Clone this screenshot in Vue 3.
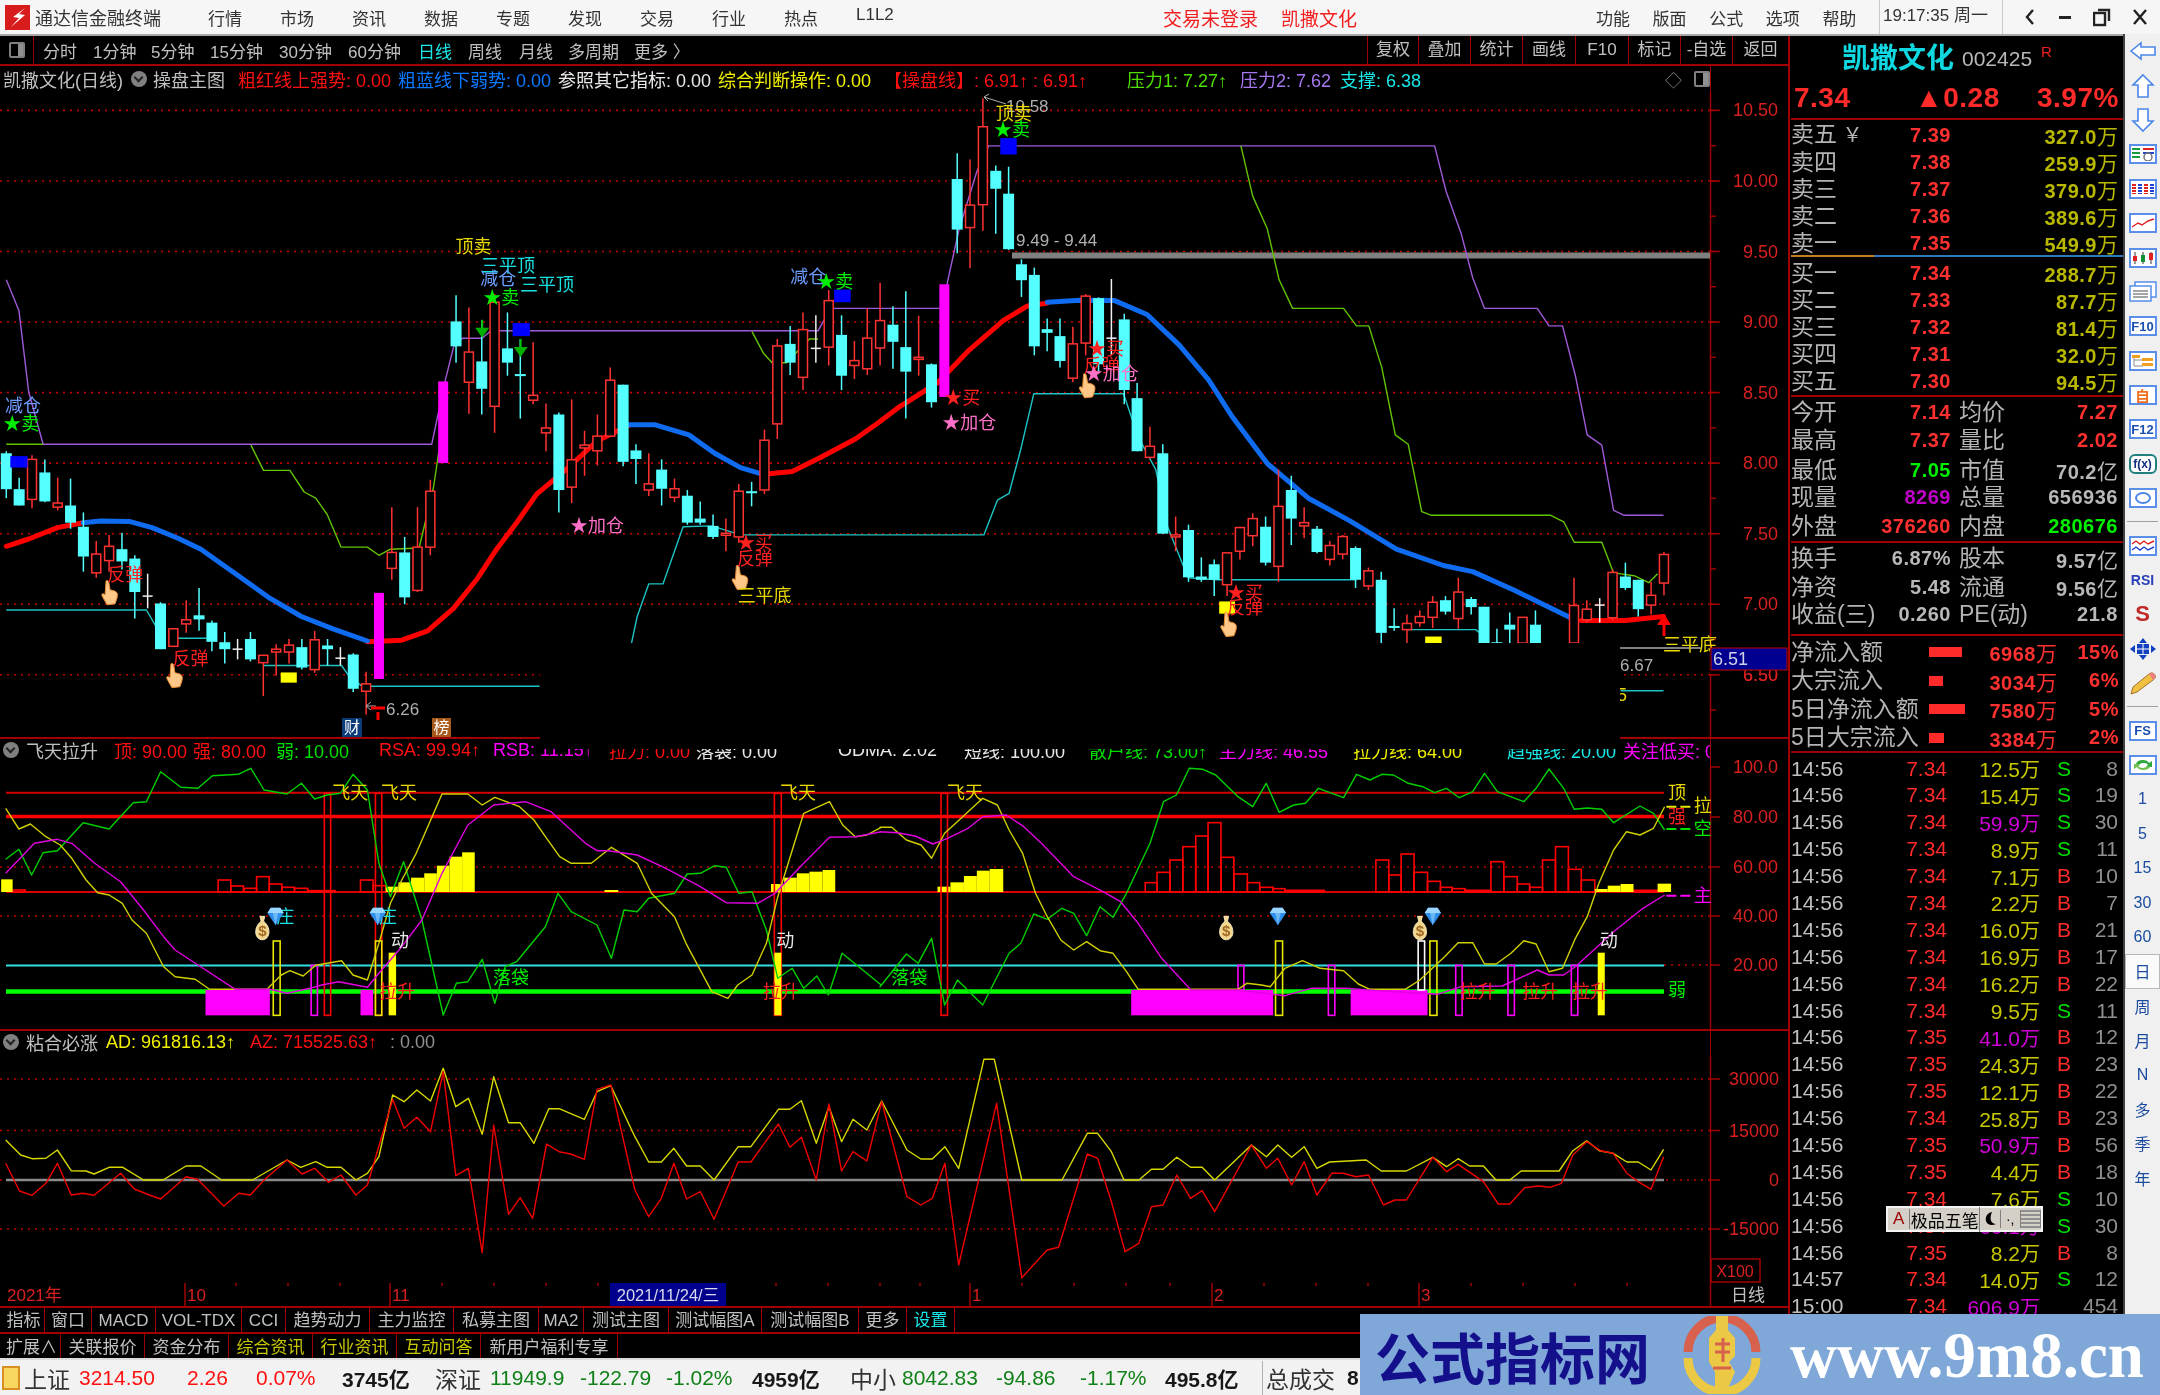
<script setup>
// chart points were read off zoomed crops, so each group carries its crop scale
const L1 = { sx: 1 / 1.742, ox: 0, sy: 1 / 2.45, oy: 90 }
const R1 = { sx: 1 / 1.704, ox: 880, sy: 1 / 2.45, oy: 90 }
const L2 = { sx: 1 / 1.742, ox: 0, sy: 1 / 3, oy: 730 }
const R2 = { sx: 1 / 1.704, ox: 880, sy: 1 / 3, oy: 730 }
const P3 = { sx: 1 / 0.871, ox: 0, sy: 1 / 3, oy: 1030 }

const px = (s, x) => s.ox + x * s.sx
const py = (s, y) => s.oy + y * s.sy
const line = (s, a) => {
  const out = []
  for (let i = 0; i < a.length; i += 2) out.push(`${px(s, a[i]).toFixed(1)},${py(s, a[i + 1]).toFixed(1)}`)
  return out.join(' ')
}

const menus = ['行情', '市场', '资讯', '数据', '专题', '发现', '交易', '行业', '热点', 'L1L2']
const rightMenus = ['功能', '版面', '公式', '选项', '帮助']

const periods = [
  { t: '分时', w: 50 }, { t: '1分钟', w: 58 }, { t: '5分钟', w: 59 }, { t: '15分钟', w: 69 },
  { t: '30分钟', w: 69 }, { t: '60分钟', w: 70 }, { t: '日线', w: 50, c: 'c-cyan' }, { t: '周线', w: 51 },
  { t: '月线', w: 49 }, { t: '多周期', w: 66 }, { t: '更多 〉', w: 70 },
]
const tools = [
  { t: '复权', w: 51 }, { t: '叠加', w: 52 }, { t: '统计', w: 52 }, { t: '画线', w: 53 },
  { t: 'F10', w: 53 }, { t: '标记', w: 52 }, { t: '-自选', w: 52 }, { t: '返回', w: 56 },
]

const infoItems = [
  { t: '粗红线上强势: 0.00', c: 'c-red', w: 160 },
  { t: '粗蓝线下弱势: 0.00', c: 'c-blue', w: 160 },
  { t: '参照其它指标: 0.00', c: 'c-white', w: 160 },
  { t: '综合判断操作: 0.00', c: 'c-yellow', w: 166 },
  { t: '【操盘线】: 6.91↑ : 6.91↑', c: 'c-red', w: 243 },
  { t: '压力1: 7.27↑', c: 'c-lime', w: 113 },
  { t: '压力2: 7.62', c: 'c-purple', w: 100 },
  { t: '支撑: 6.38', c: 'c-cyan', w: 100 },
]

const title2 = [
  { t: '顶: 90.00', c: 'c-red', w: 79 }, { t: '强: 80.00', c: 'c-red', w: 83 },
  { t: '弱: 10.00', c: 'c-green', w: 103 }, { t: 'RSA: 99.94↑', c: 'c-red', w: 114 },
  { t: 'RSB: 11.15↑', c: 'c-magenta', w: 116 }, { t: '拉力: 0.00', c: 'c-red', w: 87 },
  { t: '落袋: 0.00', c: 'c-white', w: 142 }, { t: 'ODMA: 2.02', c: 'c-white', w: 126 },
  { t: '短线: 100.00', c: 'c-white', w: 125 }, { t: '散户线: 73.00↑', c: 'c-green', w: 130 },
  { t: '主力线: 46.55', c: 'c-magenta', w: 134 }, { t: '拉力线: 64.00', c: 'c-yellow', w: 154 },
  { t: '趋强线: 20.00', c: 'c-cyan', w: 116 }, { t: '关注低买: 0', c: 'c-magenta', w: 86 },
]
const title3 = [
  { t: 'AD: 961816.13↑', c: 'c-yellow', w: 144 },
  { t: 'AZ: 715525.63↑', c: 'c-red', w: 140 },
  { t: ': 0.00', c: 'c-gray', w: 80 },
]

const tabsA = [
  { t: '指标', w: 42 }, { t: '窗口', w: 47 }, { t: 'MACD', w: 64 }, { t: 'VOL-TDX', w: 86 }, { t: 'CCI', w: 44 },
  { t: '趋势动力', w: 84 }, { t: '主力监控', w: 84 }, { t: '私募主图', w: 85 }, { t: 'MA2', w: 45 },
  { t: '测试主图', w: 85 }, { t: '测试幅图A', w: 93 }, { t: '测试幅图B', w: 97 }, { t: '更多', w: 48 },
  { t: '设置', w: 48, c: 'c-cyan' },
]
const tabsB = [
  { t: '扩展∧', w: 58 }, { t: '关联报价', w: 84 }, { t: '资金分布', w: 84 }, { t: '综合资讯', w: 84, c: 'c-olive' },
  { t: '行业资讯', w: 84, c: 'c-olive' }, { t: '互动问答', w: 84, c: 'c-olive' }, { t: '新用户福利专享', w: 137 },
]

const statusItems = [
  { t: '上证', c: 'st-name', w: 55 }, { t: '3214.50', c: 'st-red', w: 108 }, { t: '2.26', c: 'st-red', w: 69 },
  { t: '0.07%', c: 'st-red', w: 86 }, { t: '3745亿', c: 'st-dark', w: 93 },
  { t: '深证', c: 'st-name', w: 55 }, { t: '11949.9', c: 'st-green', w: 90 }, { t: '-122.79', c: 'st-green', w: 86 },
  { t: '-1.02%', c: 'st-green', w: 86 }, { t: '4959亿', c: 'st-dark', w: 98 },
  { t: '中小', c: 'st-name', w: 52 }, { t: '8042.83', c: 'st-green', w: 94 }, { t: '-94.86', c: 'st-green', w: 84 },
  { t: '-1.17%', c: 'st-green', w: 85 }, { t: '495.8亿', c: 'st-dark', w: 97 },
  { t: '总成交', c: 'st-name st-first', w: 85 }, { t: '8', c: 'st-dark', w: 20 },
]

// [kind, top, bottom, high, low] in crop y; c = falling, r = rising, w = flat, n = nothing drawn
const candles = [
  ['c', 890, 978, 885, 1000], ['c', 978, 1018, 950, 1018], ['r', 905, 1003, 895, 1025], ['c', 937, 1008, 905, 1010],
  ['r', 1012, 1022, 950, 1030], ['c', 1018, 1060, 952, 1075], ['c', 1070, 1143, 1035, 1180], ['r', 1137, 1183, 1105, 1195],
  ['r', 1118, 1153, 1090, 1180], ['c', 1125, 1155, 1085, 1175], ['c', 1148, 1230, 1140, 1295], ['w', 1240, 1240, 1185, 1270],
  ['c', 1258, 1370, 1255, 1370], ['r', 1320, 1363, 1320, 1363], ['r', 1298, 1308, 1250, 1330], ['c', 1287, 1297, 1220, 1325],
  ['c', 1305, 1352, 1300, 1375], ['c', 1353, 1370, 1328, 1405], ['w', 1370, 1370, 1345, 1395], ['c', 1345, 1395, 1328, 1400],
  ['r', 1385, 1403, 1385, 1485], ['r', 1370, 1377, 1358, 1435], ['r', 1360, 1377, 1345, 1405], ['c', 1365, 1415, 1345, 1420],
  ['r', 1347, 1420, 1325, 1428], ['c', 1361, 1370, 1345, 1410], ['w', 1392, 1392, 1365, 1410], ['c', 1383, 1467, 1380, 1475],
  ['r', 1455, 1473, 1425, 1530], ['m', 1232, 1443, 1232, 1450], ['r', 1133, 1172, 1022, 1200], ['c', 1133, 1243, 1095, 1260],
  ['r', 1120, 1226, 1022, 1230], ['r', 983, 1120, 955, 1140], ['m', 714, 914, 714, 914], ['c', 567, 628, 503, 668],
  ['r', 642, 716, 533, 793], ['c', 665, 732, 565, 795], ['r', 520, 775, 500, 840], ['c', 633, 668, 545, 700],
  ['c', 696, 701, 610, 805], ['r', 748, 760, 618, 770], ['r', 828, 840, 768, 885], ['c', 795, 980, 790, 1035],
  ['r', 906, 973, 758, 1012], ['r', 870, 877, 835, 945], ['r', 848, 884, 795, 920], ['r', 711, 848, 680, 850],
  ['c', 722, 911, 722, 922], ['c', 883, 904, 868, 965], ['r', 965, 980, 890, 995], ['c', 930, 977, 905, 1018],
  ['r', 977, 998, 952, 1010], ['c', 994, 1060, 980, 1065], ['c', 1050, 1060, 1008, 1065], ['c', 1068, 1095, 1040, 1100],
  ['r', 1086, 1090, 1050, 1130], ['r', 983, 1095, 965, 1110], ['c', 983, 988, 960, 1020], ['r', 858, 980, 832, 990],
  ['r', 627, 818, 610, 855], ['c', 622, 668, 578, 698], ['r', 587, 704, 545, 735], ['w', 633, 633, 552, 668],
  ['r', 516, 630, 490, 675], ['c', 600, 700, 552, 735], ['r', 663, 675, 615, 708], ['r', 608, 683, 535, 698],
  ['r', 565, 632, 472, 675], ['c', 575, 617, 530, 683], ['c', 630, 690, 493, 805], ['r', 655, 660, 553, 700],
  ['c', 672, 765, 670, 778], ['m', 476, 752, 476, 752], ['c', 218, 342, 155, 400], ['r', 282, 337, 170, 437],
  ['r', 90, 281, 20, 345], ['c', 198, 242, 185, 352], ['c', 254, 390, 188, 392], ['c', 427, 466, 415, 507],
  ['c', 453, 628, 435, 650], ['c', 586, 595, 560, 640], ['c', 603, 664, 560, 680], ['r', 622, 706, 580, 716],
  ['r', 505, 620, 500, 650], ['c', 510, 672, 508, 690], ['w', 608, 608, 463, 650], ['c', 562, 735, 548, 770],
  ['c', 755, 885, 718, 885], ['r', 873, 900, 825, 903], ['c', 890, 1087, 868, 1088], ['r', 1090, 1095, 1045, 1130],
  ['c', 1078, 1194, 1065, 1205], ['c', 1192, 1200, 1145, 1205], ['c', 1162, 1200, 1150, 1240], ['r', 1134, 1212, 1134, 1240],
  ['r', 1072, 1130, 1070, 1150], ['r', 1050, 1092, 1037, 1118], ['c', 1070, 1158, 1045, 1165], ['r', 1020, 1167, 930, 1205],
  ['c', 980, 1050, 945, 1115], ['r', 1060, 1068, 1022, 1098], ['c', 1075, 1132, 1068, 1135], ['r', 1116, 1150, 1105, 1165],
  ['r', 1094, 1137, 1090, 1150], ['c', 1122, 1200, 1118, 1220], ['r', 1178, 1215, 1170, 1225], ['c', 1200, 1330, 1180, 1355],
  ['c', 1313, 1318, 1270, 1325], ['r', 1307, 1322, 1285, 1355], ['r', 1290, 1305, 1275, 1315], ['r', 1255, 1292, 1240, 1318],
  ['c', 1250, 1278, 1240, 1285], ['r', 1230, 1295, 1195, 1320], ['c', 1247, 1267, 1242, 1285], ['c', 1266, 1355, 1266, 1355],
  ['c', 1353, 1355, 1320, 1355], ['c', 1310, 1322, 1280, 1355], ['r', 1292, 1355, 1292, 1355], ['c', 1310, 1355, 1275, 1355],
  ['n', 0, 0, 0, 0], ['n', 0, 0, 0, 0], ['r', 1263, 1355, 1195, 1355], ['r', 1272, 1298, 1250, 1305],
  ['w', 1262, 1262, 1245, 1305], ['r', 1182, 1293, 1175, 1300], ['c', 1192, 1220, 1158, 1225], ['c', 1200, 1272, 1200, 1290],
  ['r', 1238, 1262, 1205, 1285], ['r', 1138, 1208, 1132, 1238],
]
const candleItems = candles
  .map((c, i) => ({
    kind: c[0],
    x: 6.3 + 12.85 * i,
    top: py(L1, c[1]),
    h: Math.max(py(L1, c[2]) - py(L1, c[1]), 2),
    hi: py(L1, c[3]),
    lo: py(L1, c[4]),
  }))
  .filter((c) => c.kind !== 'n')

const maRed = [
  line(L1, [11, 1118, 50, 1100, 100, 1072, 145, 1060]),
  line(L1, [640, 1352, 700, 1348, 745, 1325, 790, 1270, 830, 1200, 865, 1125, 900, 1060, 935, 990, 990, 925, 1040, 860, 1095, 822]),
  line(L1, [1340, 940, 1380, 935, 1430, 900, 1490, 855, 1530, 815, 1568, 775]) + ' ' +
    line(R1, [40, 770, 100, 715, 150, 640, 210, 565, 250, 530, 285, 522]),
  line(R1, [1195, 1300, 1270, 1300, 1335, 1290]),
]
const maBlue = [
  line(L1, [145, 1060, 175, 1056, 225, 1057, 265, 1072, 310, 1098, 350, 1125, 385, 1160, 430, 1205, 470, 1245, 525, 1290, 580, 1320, 640, 1350]),
  line(L1, [1095, 820, 1140, 820, 1200, 845, 1245, 890, 1290, 925, 1325, 940]),
  line(R1, [285, 520, 340, 515, 400, 516, 455, 550, 510, 625, 560, 710, 600, 800, 660, 915, 730, 1000, 800, 1055, 880, 1125, 960, 1165, 1010, 1180, 1080, 1225, 1175, 1292]),
]
const purpleLine = [
  line(L1, [11, 465, 33, 540, 50, 740, 75, 868, 752, 868, 775, 715, 790, 630, 805, 608, 840, 608, 855, 590, 1425, 590, 1435, 565, 1450, 535, 1568, 535]) + ' ' +
    line(R1, [105, 535, 115, 470, 135, 340, 165, 200, 185, 137, 945, 137, 965, 250, 990, 350, 1010, 460, 1030, 535, 1120, 535, 1140, 578, 1163, 578, 1185, 700, 1205, 845, 1230, 870, 1250, 1030, 1268, 1042, 1335, 1042]),
]
const limeLine = [
  line(L1, [11, 868, 75, 868]),
  line(L1, [437, 870, 459, 932, 505, 932, 530, 985, 550, 1000, 570, 1040, 594, 1120, 640, 1120, 660, 1140, 680, 1125, 730, 1122, 755, 975, 765, 880]),
  line(L1, [1310, 592, 1330, 645, 1345, 668, 1370, 668, 1410, 610, 1425, 610]),
  line(R1, [615, 137, 635, 260, 660, 340, 680, 465, 703, 535, 790, 535, 812, 578, 833, 578, 855, 680, 878, 845, 900, 868, 923, 1033, 940, 1042, 1143, 1042, 1165, 1058, 1183, 1108, 1230, 1108, 1250, 1183, 1285, 1190, 1310, 1207, 1325, 1185]),
]
const tealLine = [
  line(L1, [11, 1274, 255, 1274, 272, 1315]),
  line(L1, [300, 1343, 360, 1343]),
  line(L1, [459, 1410, 595, 1410, 610, 1440, 630, 1460, 640, 1461, 940, 1461]),
  line(L1, [1100, 1355, 1110, 1290, 1130, 1210, 1155, 1210, 1190, 1070, 1240, 1068, 1290, 1090, 1568, 1090]) + ' ' +
    line(R1, [177, 1090, 200, 1005, 220, 988, 240, 880, 262, 744, 415, 744, 440, 850, 470, 930, 490, 1070, 525, 1195, 575, 1200, 812, 1200]),
  line(R1, [900, 1322, 1015, 1322, 1030, 1340]),
  line(R1, [1262, 1472, 1335, 1472]),
]

const priceLevels = ['10.50', '10.00', '9.50', '9.00', '8.50', '8.00', '7.50', '7.00', '6.50'].map((t, i) => ({ t, y: 110.4 + i * 70.55 }))
const priceMinor = Array.from({ length: 18 }, (_, i) => 110.4 + i * 35.27)

const labels1 = [
  { s: L1, x: 825, y: 385, t: '顶卖', c: 'f-yellow' }, { s: L1, x: 885, y: 430, t: '三平顶', c: 'f-cyan' },
  { s: L1, x: 953, y: 478, t: '三平顶', c: 'f-cyan' }, { s: L1, x: 868, y: 462, t: '减仓', c: 'f-sky' },
  { s: L1, x: 40, y: 775, t: '减仓', c: 'f-sky' }, { s: L1, x: 1408, y: 458, t: '减仓', c: 'f-sky' },
  { s: L1, x: 218, y: 1188, t: '反弹', c: 'f-red' }, { s: L1, x: 332, y: 1393, t: '反弹', c: 'f-red' },
  { s: L1, x: 1315, y: 1148, t: '反弹', c: 'f-red' }, { s: R1, x: 378, y: 675, t: '反弹', c: 'f-red' },
  { s: R1, x: 622, y: 1268, t: '反弹', c: 'f-red' }, { s: L1, x: 1040, y: 1068, t: '★加仓', c: 'f-pink' },
  { s: R1, x: 152, y: 815, t: '★加仓', c: 'f-pink' }, { s: R1, x: 395, y: 697, t: '★加仓', c: 'f-pink' },
  { s: L1, x: 1315, y: 1110, t: '★买', c: 'f-red' }, { s: R1, x: 140, y: 755, t: '★买', c: 'f-red' },
  { s: R1, x: 385, y: 635, t: '★买', c: 'f-red' }, { s: R1, x: 622, y: 1232, t: '★买', c: 'f-red' },
  { s: L1, x: 1332, y: 1240, t: '三平底', c: 'f-yellow' }, { s: R1, x: 228, y: 60, t: '顶卖', c: 'f-yellow' },
  { s: L1, x: 873, y: 510, t: '★卖', c: 'f-green' }, { s: L1, x: 37, y: 818, t: '★卖', c: 'f-green' },
  { s: L1, x: 1455, y: 470, t: '★卖', c: 'f-green' }, { s: R1, x: 225, y: 97, t: '★卖', c: 'f-green' },
].map((l) => ({ x: px(l.s, l.x), y: py(l.s, l.y), t: l.t, c: l.c }))

const hands = [[L1, 190, 1232], [L1, 303, 1435], [L1, 1288, 1195], [R1, 352, 725], [R1, 593, 1310]]
  .map(([s, x, y]) => ({ x: px(s, x), y: py(s, y) }))
const blueBoxes = [[L1, 18, 897, 30, 28], [L1, 893, 571, 30, 32], [L1, 1453, 489, 29, 31], [R1, 205, 118, 28, 40]]
  .map(([s, x, y, w, h]) => ({ x: px(s, x), y: py(s, y), w: w * s.sx, h: h * s.sy }))
const yellowBoxes = [[L1, 489, 1427, 28, 25], [R1, 578, 1253, 27, 30], [R1, 929, 1339, 28, 18]]
  .map(([s, x, y, w, h]) => ({ x: px(s, x), y: py(s, y), w: w * s.sx, h: h * s.sy }))
const downArrows = [[840, 563], [907, 610]].map(([x, y]) => ({ x: px(L1, x), y: py(L1, y) }))

const yellowCurve = line(L2, [10, 235, 33, 297, 53, 282, 80, 320, 105, 345, 125, 385, 150, 450, 170, 488, 190, 495, 213, 520, 230, 570, 255, 610, 285, 710, 305, 740, 340, 748, 365, 778, 465, 778, 490, 735, 505, 722, 528, 738, 550, 706, 595, 692, 615, 735, 640, 750, 660, 640, 680, 520, 700, 450, 725, 370, 770, 192, 815, 192, 840, 225, 862, 202, 905, 230, 930, 270, 950, 320, 975, 380, 995, 400, 1030, 400, 1065, 352, 1110, 400, 1135, 490, 1175, 560, 1195, 640, 1240, 785, 1268, 805, 1285, 765, 1310, 735, 1335, 640, 1355, 500, 1400, 250, 1445, 215, 1468, 285, 1490, 320, 1510, 315, 1535, 292]) + ' ' +
  line(R2, [0, 292, 20, 292, 45, 330, 70, 345, 88, 385, 110, 310, 135, 270, 175, 205, 200, 225, 220, 300, 243, 370, 265, 490, 285, 560, 308, 630, 330, 660, 352, 635, 375, 662, 397, 670, 420, 725, 440, 778, 610, 778, 625, 760, 650, 765, 665, 770, 690, 715, 720, 692, 750, 715, 790, 722, 815, 762, 835, 778, 895, 778, 920, 750, 962, 680, 985, 638, 1010, 638, 1030, 702, 1050, 702, 1075, 670, 1097, 632, 1118, 642, 1140, 725, 1163, 715, 1185, 625, 1205, 560, 1225, 460, 1250, 360, 1272, 305, 1295, 315, 1318, 295, 1337, 230])
const magentaCurve = line(L2, [10, 430, 35, 385, 60, 340, 100, 328, 125, 340, 165, 400, 210, 455, 250, 540, 285, 620, 305, 660, 345, 705, 410, 778, 470, 778, 500, 790, 540, 775, 560, 765, 590, 755, 640, 772, 660, 730, 700, 650, 735, 570, 770, 430, 815, 285, 860, 225, 915, 215, 960, 245, 1020, 340, 1040, 362, 1060, 362, 1110, 375, 1160, 415, 1220, 470, 1265, 518, 1320, 520, 1350, 490, 1400, 400, 1445, 322, 1490, 320, 1535, 305]) + ' ' +
  line(R2, [0, 305, 30, 308, 60, 318, 90, 342, 115, 325, 150, 295, 175, 260, 215, 255, 245, 290, 275, 340, 330, 440, 380, 485, 410, 515, 440, 580, 480, 685, 530, 780, 610, 780, 690, 797, 735, 775, 795, 775, 830, 780, 950, 793, 990, 770, 1060, 768, 1120, 720, 1140, 735, 1165, 735, 1185, 710, 1250, 605, 1300, 535, 1337, 495])
const greenCurve = line(L2, [10, 388, 33, 358, 55, 435, 75, 368, 100, 362, 145, 278, 190, 297, 232, 218, 255, 215, 280, 125, 315, 172, 345, 175, 370, 137, 415, 133, 437, 115, 460, 180, 500, 192, 525, 160, 548, 207, 570, 195, 593, 190, 615, 133, 640, 180, 660, 400, 680, 500, 703, 395, 735, 570, 772, 855, 795, 760, 815, 755, 840, 688, 862, 820, 880, 710, 900, 695, 950, 590, 972, 490, 995, 545, 1040, 585, 1065, 685, 1087, 540, 1110, 545, 1130, 505, 1175, 490, 1197, 432, 1220, 430, 1245, 407, 1265, 412, 1287, 490, 1310, 485, 1335, 600, 1355, 745, 1380, 715, 1400, 775, 1423, 738, 1443, 795, 1467, 670, 1535, 765]) + ' ' +
  line(R2, [0, 770, 45, 672, 65, 700, 88, 625, 110, 825, 132, 750, 175, 825, 220, 670, 240, 640, 262, 552, 285, 568, 310, 535, 330, 550, 352, 617, 375, 530, 397, 562, 420, 490, 460, 340, 483, 215, 505, 195, 527, 115, 550, 118, 572, 135, 610, 200, 635, 230, 658, 160, 680, 247, 705, 225, 725, 220, 747, 175, 790, 203, 812, 133, 835, 150, 855, 133, 875, 135, 900, 160, 925, 170, 945, 188, 965, 175, 987, 203, 1010, 185, 1030, 130, 1052, 185, 1097, 215, 1118, 175, 1140, 117, 1165, 175, 1183, 238, 1205, 234, 1230, 238, 1250, 278, 1295, 228, 1318, 250, 1337, 300])

// [x1, x2, top, bottom] in crop coordinates
const rects = (s, list) => list.map(([a, b, t, bot]) => ({
  x: px(s, a), w: (b - a) * s.sx, y: py(s, t), h: (bot - t) * s.sy,
}))
const base = 486
const barsHollow = [
  ...rects(L2, [[22, 44, 480, base], [380, 402, 450, base], [402, 424, 468, base], [425, 447, 475, base], [447, 469, 440, base], [469, 491, 462, base], [491, 513, 472, base], [513, 536, 475, base], [536, 584, 482, base], [628, 650, 450, base], [650, 672, 467, base]]),
  ...rects(R2, [[452, 472, 458, base], [472, 494, 427, base], [494, 516, 390, base], [516, 538, 350, base], [538, 559, 318, base], [559, 581, 278, base], [581, 603, 382, base], [603, 626, 432, base], [626, 647, 458, base], [647, 670, 472, base], [670, 690, 476, base], [690, 757, 481, base], [845, 867, 390, base], [867, 888, 435, base], [888, 910, 372, base], [910, 933, 427, base], [933, 955, 454, base], [955, 975, 472, base], [975, 997, 476, base], [997, 1041, 481, base], [1041, 1063, 395, base], [1063, 1086, 440, base], [1086, 1107, 462, base], [1107, 1129, 472, base], [1129, 1151, 390, base], [1151, 1173, 350, base], [1173, 1195, 418, base], [1195, 1218, 450, base], [1284, 1325, 481, base]]),
]
const barsYellow = [
  ...rects(L2, [[2, 22, 448, base], [672, 694, 470, base], [694, 716, 457, base], [716, 739, 443, base], [739, 761, 430, base], [761, 783, 407, base], [783, 805, 380, base], [805, 827, 367, base], [1053, 1077, 480, base], [1343, 1366, 462, base], [1366, 1388, 443, base], [1388, 1410, 430, base], [1410, 1433, 425, base], [1433, 1455, 420, base]]),
  ...rects(R2, [[98, 120, 470, base], [120, 143, 457, base], [143, 165, 438, base], [165, 187, 422, base], [187, 210, 417, base], [1218, 1240, 477, base], [1240, 1262, 467, base], [1262, 1284, 462, base], [1325, 1348, 461, base]]),
]
const fillMagenta = [...rects(L2, [[358, 470, 780, 856], [628, 650, 780, 856]]), ...rects(R2, [[428, 670, 780, 856], [802, 933, 780, 856]])]
const fillYellow = [...rects(L2, [[677, 690, 668, 856], [1349, 1361, 668, 856]]), ...rects(R2, [[1223, 1235, 668, 856]])]
const outlines = [
  ...rects(L2, [[565, 576, 190, 856], [654, 665, 190, 856], [1349, 1361, 190, 856]]).map((r) => ({ ...r, c: '#ff0000' })),
  ...rects(R2, [[104, 115, 190, 856]]).map((r) => ({ ...r, c: '#ff0000' })),
  ...rects(L2, [[476, 488, 633, 856], [654, 665, 633, 856]]).map((r) => ({ ...r, c: '#e8e800' })),
  ...rects(R2, [[674, 686, 633, 856], [937, 949, 633, 856]]).map((r) => ({ ...r, c: '#e8e800' })),
  ...rects(R2, [[917, 928, 633, 780]]).map((r) => ({ ...r, c: '#ffffff' })),
  ...rects(L2, [[542, 553, 706, 856]]).map((r) => ({ ...r, c: '#ff00ff' })),
  ...rects(R2, [[610, 620, 706, 780], [764, 775, 706, 856], [981, 992, 706, 856], [1070, 1081, 706, 856], [1178, 1189, 706, 856]]).map((r) => ({ ...r, c: '#ff00ff' })),
]
const labels2 = [
  { s: L2, x: 610, y: 188, t: '飞天', c: 'f-yellow' }, { s: L2, x: 695, y: 188, t: '飞天', c: 'f-yellow' },
  { s: L2, x: 1390, y: 188, t: '飞天', c: 'f-yellow' }, { s: R2, x: 145, y: 188, t: '飞天', c: 'f-yellow' },
  { s: L2, x: 697, y: 632, t: '动', c: 'f-white' }, { s: L2, x: 1368, y: 632, t: '动', c: 'f-white' },
  { s: R2, x: 1242, y: 632, t: '动', c: 'f-white' }, { s: L2, x: 692, y: 785, t: '拉升', c: 'f-red' },
  { s: L2, x: 1360, y: 785, t: '拉升', c: 'f-red' }, { s: R2, x: 1018, y: 785, t: '拉升', c: 'f-red' },
  { s: R2, x: 1125, y: 785, t: '拉升', c: 'f-red' }, { s: R2, x: 1210, y: 785, t: '拉升', c: 'f-red' },
  { s: L2, x: 890, y: 745, t: '落袋', c: 'f-green' }, { s: R2, x: 50, y: 745, t: '落袋', c: 'f-green' },
  { s: L2, x: 497, y: 560, t: '庄', c: 'f-cyan' }, { s: L2, x: 676, y: 560, t: '庄', c: 'f-cyan' },
  { s: R2, x: 1358, y: 188, t: '顶', c: 'f-yellow' }, { s: R2, x: 1402, y: 228, t: '拉', c: 'f-yellow' },
  { s: R2, x: 1358, y: 262, t: '强', c: 'f-red' }, { s: R2, x: 1402, y: 297, t: '空', c: 'f-green' },
  { s: R2, x: 1402, y: 497, t: '主', c: 'f-magenta' }, { s: R2, x: 1358, y: 780, t: '弱', c: 'f-green' },
].map((l) => ({ x: px(l.s, l.x), y: py(l.s, l.y), t: l.t, c: l.c }))
const dashes = [[230, '#e8e800'], [297, '#00e000'], [497, '#ff00ff']].map(([y, c]) => ({ y: py(R2, y), c, x1: px(R2, 1340), x2: px(R2, 1385) }))
const diamonds = [[L2, 480, 558], [L2, 658, 558], [R2, 678, 558], [R2, 942, 558]].map(([s, x, y]) => ({ x: px(s, x), y: py(s, y) }))
const bags = [[L2, 457, 595], [R2, 590, 595], [R2, 920, 595]].map(([s, x, y]) => ({ x: px(s, x), y: py(s, y) }))
const axis2 = [['100.0', 767], ['80.00', 817], ['60.00', 867], ['40.00', 916], ['20.00', 965]]

const yellow3 = line(P3, [5, 330, 18, 375, 28, 386, 40, 385, 50, 360, 62, 422, 75, 423, 82, 432, 95, 412, 107, 412, 125, 450, 142, 450, 162, 408, 175, 408, 193, 450, 220, 450, 250, 390, 262, 412, 275, 395, 285, 412, 297, 412, 310, 450, 320, 430, 330, 380, 342, 195, 352, 215, 363, 180, 375, 213, 386, 115, 397, 230, 408, 205, 420, 313, 430, 140, 443, 278, 453, 278, 465, 340, 478, 236, 487, 236, 509, 268, 520, 185, 532, 167, 553, 320, 565, 396, 576, 396, 587, 355, 598, 408, 610, 408, 622, 450, 643, 350, 654, 350, 678, 238, 688, 238, 698, 212, 711, 340, 722, 230, 733, 335, 743, 268, 755, 300, 768, 213, 790, 360, 802, 387, 812, 387, 823, 350, 835, 415, 857, 88, 866, 88, 890, 450, 925, 450, 947, 310, 956, 310, 968, 365, 979, 450, 992, 450, 1003, 418, 1013, 418, 1025, 382, 1037, 412, 1047, 412, 1058, 450, 1090, 345, 1103, 380, 1113, 345, 1125, 382, 1136, 350, 1147, 415, 1158, 396, 1190, 390, 1203, 423, 1225, 423, 1248, 382, 1260, 410, 1270, 386, 1280, 408, 1292, 408, 1303, 450, 1315, 450, 1325, 423, 1358, 423, 1370, 362, 1382, 332, 1393, 362, 1405, 370, 1417, 396, 1427, 396, 1438, 420, 1449, 358])
const red3 = line(P3, [5, 400, 17, 483, 28, 496, 40, 460, 50, 400, 62, 495, 72, 490, 82, 496, 105, 430, 117, 477, 130, 495, 140, 507, 162, 440, 172, 448, 195, 528, 208, 490, 218, 495, 230, 450, 250, 390, 263, 432, 274, 415, 286, 457, 297, 435, 310, 495, 320, 465, 342, 208, 352, 295, 363, 262, 375, 305, 386, 125, 397, 437, 408, 415, 420, 668, 430, 285, 443, 553, 453, 503, 464, 565, 476, 342, 487, 365, 497, 372, 509, 388, 520, 178, 532, 165, 553, 480, 565, 560, 576, 505, 587, 400, 598, 507, 610, 485, 622, 568, 643, 396, 654, 396, 678, 282, 688, 352, 698, 322, 711, 450, 722, 222, 733, 423, 743, 365, 755, 393, 768, 215, 790, 500, 802, 525, 812, 505, 823, 400, 835, 705, 868, 220, 890, 743, 912, 660, 922, 652, 947, 372, 956, 385, 968, 515, 980, 665, 992, 640, 1003, 530, 1013, 525, 1025, 435, 1037, 505, 1047, 482, 1058, 545, 1090, 345, 1103, 415, 1113, 385, 1125, 465, 1136, 395, 1147, 495, 1160, 430, 1170, 430, 1181, 440, 1192, 435, 1205, 525, 1215, 510, 1225, 510, 1248, 382, 1260, 425, 1270, 403, 1292, 455, 1305, 522, 1315, 522, 1328, 473, 1340, 468, 1350, 472, 1360, 460, 1370, 375, 1382, 335, 1394, 362, 1405, 370, 1417, 430, 1427, 455, 1438, 478, 1449, 380])
const axis3 = [['30000', 1079], ['15000', 1130.5], ['0', 1180], ['-15000', 1229]]
const timeMarks = [{ x: 185, t: '10' }, { x: 390, t: '11' }, { x: 970, t: '1' }, { x: 1212, t: '2' }, { x: 1419, t: '3' }]
const timeMinor = [236, 288, 340, 442, 494, 546, 598, 776, 828, 880, 920, 1022, 1074, 1126, 1170, 1264, 1316, 1368, 1471, 1523, 1575, 1627]

const sell = [['卖五', '7.39', '327.0'], ['卖四', '7.38', '259.9'], ['卖三', '7.37', '379.0'], ['卖二', '7.36', '389.6'], ['卖一', '7.35', '549.9']]
const buy = [['买一', '7.34', '288.7'], ['买二', '7.33', '87.7'], ['买三', '7.32', '81.4'], ['买四', '7.31', '32.0'], ['买五', '7.30', '94.5']]
const stats = [
  { a: '今开', b: '7.14', bc: 'q-red', c: '均价', d: '7.27', dc: 'q-red' },
  { a: '最高', b: '7.37', bc: 'q-red', c: '量比', d: '2.02', dc: 'q-red' },
  { a: '最低', b: '7.05', bc: 'q-green', c: '市值', d: '70.2', du: '亿', dc: 'q-gray' },
  { a: '现量', b: '8269', bc: 'q-magenta', c: '总量', d: '656936', dc: 'q-gray' },
  { a: '外盘', b: '376260', bc: 'q-red', c: '内盘', d: '280676', dc: 'q-green' },
]
const stats2 = [
  { a: '换手', b: '6.87%', bc: 'q-gray', c: '股本', d: '9.57', du: '亿', dc: 'q-gray' },
  { a: '净资', b: '5.48', bc: 'q-gray', c: '流通', d: '9.56', du: '亿', dc: 'q-gray' },
  { a: '收益(三)', b: '0.260', bc: 'q-gray', c: 'PE(动)', d: '21.8', dc: 'q-gray' },
]
const flows = [
  { a: '净流入额', w: 33, v: '6968', p: '15%' }, { a: '大宗流入', w: 14, v: '3034', p: '6%' },
  { a: '5日净流入额', w: 36, v: '7580', p: '5%' }, { a: '5日大宗流入', w: 15, v: '3384', p: '2%' },
]
const ticks = [
  ['14:56', '7.34', '12.5', 'S', '8'], ['14:56', '7.34', '15.4', 'S', '19'], ['14:56', '7.34', '59.9', 'S', '30', 1],
  ['14:56', '7.34', '8.9', 'S', '11'], ['14:56', '7.34', '7.1', 'B', '10'], ['14:56', '7.34', '2.2', 'B', '7'],
  ['14:56', '7.34', '16.0', 'B', '21'], ['14:56', '7.34', '16.9', 'B', '17'], ['14:56', '7.34', '16.2', 'B', '22'],
  ['14:56', '7.34', '9.5', 'S', '11'], ['14:56', '7.35', '41.0', 'B', '12', 1], ['14:56', '7.35', '24.3', 'B', '23'],
  ['14:56', '7.35', '12.1', 'B', '22'], ['14:56', '7.34', '25.8', 'B', '23'], ['14:56', '7.35', '50.9', 'B', '56', 1],
  ['14:56', '7.35', '4.4', 'B', '18'], ['14:56', '7.34', '7.6', 'S', '10'], ['14:56', '7.34', '60.1', 'S', '30', 1],
  ['14:56', '7.35', '8.2', 'B', '8'], ['14:57', '7.34', '14.0', 'S', '12'], ['15:00', '7.34', '606.9', '', '454', 1],
]
const sideNums = ['1', '5', '15', '30', '60']
const sideChars = ['周', '月', 'N', '多', '季', '年']
</script>

<template>
  <div class="screen">
    <header class="titlebar">
      <svg class="logo" viewBox="0 0 25 25" width="25" height="25">
        <rect width="25" height="25" fill="#d81c1c" />
        <path d="M20 3 L8 12 L14 13 L6 22 L20 10 L14 9 Z" fill="#fff" />
      </svg>
      <span class="app-name">通达信金融终端</span>
      <nav class="menu">
        <span v-for="m in menus" :key="m" class="menu-item">{{ m }}</span>
      </nav>
      <span class="login">交易未登录</span>
      <span class="login login-name">凯撒文化</span>
      <nav class="menu menu-right">
        <span v-for="m in rightMenus" :key="m" class="menu-item-right">{{ m }}</span>
      </nav>
      <span class="clock">19:17:35 周一</span>
      <div class="win-buttons">
        <svg viewBox="0 0 14 20" width="14" height="20"><path d="M10 3 L4 10 L10 17" fill="none" stroke="#222" stroke-width="2.4" /></svg>
        <svg viewBox="0 0 14 20" width="14" height="20"><rect x="1" y="9" width="12" height="3" fill="#222" /></svg>
        <svg viewBox="0 0 18 20" width="18" height="20"><rect x="1" y="6" width="11" height="12" fill="none" stroke="#222" stroke-width="2.4" /><path d="M5 3 H16 V14" fill="none" stroke="#222" stroke-width="2.4" /></svg>
        <svg viewBox="0 0 16 20" width="16" height="20"><path d="M2 3 L14 17 M14 3 L2 17" stroke="#222" stroke-width="2.4" /></svg>
      </div>
    </header>

    <div class="body">
      <main class="chart-col">
        <div class="toolbar">
          <div class="layout-btn"><span class="mini-box"></span></div>
          <span v-for="p in periods" :key="p.t" class="period" :class="p.c" :style="{ width: p.w + 'px' }">{{ p.t }}</span>
          <div class="tools">
            <span v-for="t in tools" :key="t.t" class="tool" :style="{ width: t.w + 'px' }">{{ t.t }}</span>
          </div>
        </div>

        <div class="info-row">
          <div class="info-left">
            <span class="info-name">凯撒文化(日线)</span>
            <span class="chevron"></span>
            <span class="info-main">操盘主图</span>
            <span v-for="it in infoItems" :key="it.t" class="info-item" :class="it.c" :style="{ width: it.w + 'px' }">{{ it.t }}</span>
            <span class="diamond-glyph">◇</span>
            <span class="mini-box"></span>
          </div>
          <div class="axis-cell"></div>
        </div>

        <svg class="chart" viewBox="0 92 1788 645" width="1788" height="645">
          <defs>
            <symbol id="hand" viewBox="0 0 20 26" overflow="visible">
              <path d="M7 1 C9 0 10 2 10 4 L11 10 L15 11 C18 12 19 14 18 18 L16 24 L8 25 L3 16 C2 14 4 13 6 15 Z" fill="#ffc888" stroke="#e88a30" stroke-width="1" />
            </symbol>
            <symbol id="gem" viewBox="0 0 24 28" overflow="visible">
              <path d="M5 1 H19 L24 9 L12 27 L0 9 Z" fill="#2f8fee" />
              <path d="M5 1 H19 L24 9 H0 Z" fill="#9ad6ff" />
              <path d="M8 9 L12 27 L16 9 Z" fill="#6cb8f5" />
            </symbol>
            <symbol id="bag" viewBox="0 0 22 40" overflow="visible">
              <path d="M7 0 H15 L13 8 C20 14 22 20 22 26 C22 34 17 39 11 39 C5 39 0 34 0 26 C0 20 2 14 9 8 Z" fill="#f3d78f" stroke="#fff2c8" stroke-width="1.5" />
            </symbol>
          </defs>
          <line v-for="p in priceLevels" :key="p.t" class="dots" x1="0" x2="1710" :y1="p.y" :y2="p.y" />
          <line class="frame" x1="1710.5" x2="1710.5" y1="92" y2="737" />
          <line v-for="y in priceMinor" :key="y" class="frame" x1="1711" x2="1716" :y1="y" :y2="y" />
          <g v-for="p in priceLevels" :key="p.t + 'l'">
            <line class="frame" x1="1711" x2="1720" :y1="p.y" :y2="p.y" />
            <text class="axis-text" x="1778" :y="p.y">{{ p.t }}</text>
          </g>

          <rect class="band" x="1012" y="252.5" width="698" height="6" />
          <text class="gray-text" x="1016" y="240">9.49 - 9.44</text>

          <polyline v-for="(l, i) in purpleLine" :key="'pu' + i" class="thin" stroke="#a05ad8" :points="l" />
          <polyline v-for="(l, i) in limeLine" :key="'li' + i" class="thin" stroke="#62c400" :points="l" />
          <polyline v-for="(l, i) in tealLine" :key="'te' + i" class="thin" stroke="#1cc4c4" :points="l" />
          <polyline v-for="(l, i) in maRed" :key="'mr' + i" class="thick" stroke="#ff0000" :points="l" />
          <polyline v-for="(l, i) in maBlue" :key="'mb' + i" class="thick" stroke="#0f6cf0" :points="l" />

          <g v-for="(c, i) in candleItems" :key="i">
            <template v-if="c.kind === 'c'">
              <line class="wick-c" :x1="c.x" :x2="c.x" :y1="c.hi" :y2="c.lo" />
              <rect class="body-c" :x="c.x - 5.5" :y="c.top" width="11" :height="c.h" />
            </template>
            <template v-else-if="c.kind === 'r'">
              <line class="wick-r" :x1="c.x" :x2="c.x" :y1="c.hi" :y2="c.lo" />
              <rect class="body-r" :x="c.x - 4.5" :y="c.top" width="9" :height="c.h" />
            </template>
            <template v-else-if="c.kind === 'w'">
              <line class="wick-w" :x1="c.x" :x2="c.x" :y1="c.hi" :y2="c.lo" />
              <line class="wick-w" :x1="c.x - 5" :x2="c.x + 5" :y1="c.top" :y2="c.top" />
            </template>
            <rect v-else class="body-m" :x="c.x - 5" :y="c.top" width="10" :height="c.h" />
          </g>

          <rect v-for="(b, i) in blueBoxes" :key="'bb' + i" fill="#0000ff" :x="b.x" :y="b.y" :width="b.w" :height="b.h" />
          <rect v-for="(b, i) in yellowBoxes" :key="'yb' + i" fill="#ffff00" :x="b.x" :y="b.y" :width="b.w" :height="b.h" />
          <g v-for="(a, i) in downArrows" :key="'da' + i">
            <line stroke="#00c000" stroke-width="2" :x1="a.x" :x2="a.x" :y1="a.y" :y2="a.y + 10" />
            <polygon fill="#00b000" :points="`${a.x - 7},${a.y + 8} ${a.x + 7},${a.y + 8} ${a.x},${a.y + 18}`" />
          </g>
          <path d="M984 97 L1006 104 M984 97 L989 94 M984 97 L988 101" stroke="#b0b0b0" stroke-width="1" fill="none" />
          <text class="gray-text" x="1006" y="106">10.58</text>
          <use v-for="(h, i) in hands" :key="'ha' + i" href="#hand" :x="h.x - 10" :y="h.y - 13" width="20" height="26" />
          <text v-for="(l, i) in labels1" :key="'la' + i" class="mark" :class="l.c" :x="l.x" :y="l.y">{{ l.t }}</text>

          <path d="M366 706 H376 M366 706 L371 702 M366 706 L371 710" stroke="#b0b0b0" stroke-width="1" fill="none" />
          <path d="M378 712 V720 M371 708 H385" stroke="#ff0000" stroke-width="3" fill="none" />
          <text class="gray-text" x="386" y="709">6.26</text>
          <rect x="342" y="718" width="20" height="19" fill="#0a3a78" />
          <text class="tag" x="352" y="727">财</text>
          <rect x="432" y="718" width="19" height="19" fill="#a85a1c" />
          <text class="tag" x="441.5" y="727">榜</text>

          <line x1="1620" x2="1702" y1="648" y2="648" stroke="#808080" stroke-width="2" />
          <text class="gray-text" x="1620" y="665">6.67</text>
          <polygon fill="#ff0000" points="1664,614 1657,625 1671,625" />
          <line x1="1664" x2="1664" y1="624" y2="636" stroke="#ff0000" stroke-width="3" />
          <text class="mark f-yellow" x="1690" y="645">三平底</text>
          <rect x="1710" y="650" width="78" height="24" fill="#000" />
          <text class="axis-text" x="1778" y="675">6.50</text>
          <rect x="1711" y="648" width="76" height="22" fill="#000090" stroke="#c00000" stroke-width="1" />
          <text class="axis-now" x="1713" y="659">6.51</text>
          <text class="mark f-yellow" x="1622" y="695" font-size="12">5</text>
        </svg>

        <div class="pane-title">
          <div class="title-left lifted">
            <span class="chevron first"></span>
            <span class="pane-name">飞天拉升</span>
            <span v-for="it in title2" :key="it.t" class="info-item tall" :class="it.c" :style="{ width: it.w + 'px' }">{{ it.t }}</span>
          </div>
          <div class="axis-cell"></div>
        </div>
        <svg class="chart" viewBox="0 768 1788 261" width="1788" height="261">
          <line v-for="a in axis2.slice(2, 4)" :key="a[0]" class="dots" x1="0" x2="1710" :y1="a[1]" :y2="a[1]" />
          <line class="dots" x1="1664" x2="1710" y1="965" y2="965" />
          <line class="frame" x1="1710.5" x2="1710.5" y1="768" y2="1029" />
          <g v-for="a in axis2" :key="a[0] + 'l'">
            <line class="frame" x1="1711" x2="1720" :y1="a[1]" :y2="a[1]" />
            <text class="axis-text" x="1778" :y="a[1]">{{ a[0] }}</text>
          </g>
          <line x1="6" x2="1664" y1="792.7" y2="792.7" stroke="#d80000" stroke-width="2" />
          <line x1="6" x2="1664" y1="816.5" y2="816.5" stroke="#ff0000" stroke-width="3.5" />
          <line x1="6" x2="1664" y1="892" y2="892" stroke="#d80000" stroke-width="2" />
          <line x1="6" x2="1664" y1="965.5" y2="965.5" stroke="#30e0e0" stroke-width="2" />
          <line x1="6" x2="1664" y1="991.5" y2="991.5" stroke="#00ff00" stroke-width="4.5" />

          <rect v-for="(r, i) in barsHollow" :key="'bh' + i" class="hollow-red" :x="r.x" :y="r.y" :width="r.w" :height="r.h" />
          <rect v-for="(r, i) in barsYellow" :key="'by' + i" fill="#ffff00" :x="r.x" :y="r.y" :width="r.w" :height="r.h" />
          <rect v-for="(r, i) in fillMagenta" :key="'fm' + i" fill="#ff00ff" :x="r.x" :y="r.y" :width="r.w" :height="r.h" />
          <rect v-for="(r, i) in outlines" :key="'ol' + i" fill="none" stroke-width="1.6" :stroke="r.c" :x="r.x" :y="r.y" :width="r.w" :height="r.h" />
          <rect v-for="(r, i) in fillYellow" :key="'fy' + i" fill="#ffff00" :x="r.x" :y="r.y" :width="r.w" :height="r.h" />

          <polyline class="thin" stroke="#00d000" :points="greenCurve" />
          <polyline class="thin" stroke="#d0d000" :points="yellowCurve" />
          <polyline class="thin" stroke="#e000e0" :points="magentaCurve" />

          <line v-for="(d, i) in dashes" :key="'ds' + i" :x1="d.x1" :x2="d.x2" :y1="d.y" :y2="d.y" :stroke="d.c" stroke-width="2" stroke-dasharray="10 4" />
          <text v-for="(l, i) in labels2" :key="'lb' + i" class="mark" :class="l.c" :x="l.x" :y="l.y">{{ l.t }}</text>
          <use v-for="(g, i) in diamonds" :key="'gm' + i" href="#gem" :x="g.x - 12" :y="g.y - 9" width="24" height="19" />
          <g v-for="(b, i) in bags" :key="'bg' + i">
            <use href="#bag" :x="b.x - 10" :y="b.y - 12" width="20" height="24" />
            <text class="bag-text" :x="b.x" :y="b.y + 2">$</text>
          </g>
        </svg>

        <div class="pane-title short">
          <div class="title-left lifted-less">
            <span class="chevron first"></span>
            <span class="pane-name narrow">粘合必涨</span>
            <span v-for="it in title3" :key="it.t" class="info-item tall" :class="it.c" :style="{ width: it.w + 'px' }">{{ it.t }}</span>
          </div>
          <div class="axis-cell"></div>
        </div>
        <svg class="chart" viewBox="0 1056 1788 226" width="1788" height="226">
          <line v-for="a in axis3" :key="a[0]" class="dots" x1="0" x2="1710" :y1="a[1]" :y2="a[1]" />
          <line class="frame" x1="1710.5" x2="1710.5" y1="1056" y2="1282" />
          <g v-for="a in axis3" :key="a[0] + 'l'">
            <line class="frame" x1="1711" x2="1720" :y1="a[1]" :y2="a[1]" />
            <text class="axis-text" x="1779" :y="a[1]">{{ a[0] }}</text>
          </g>
          <line x1="6" x2="1664" y1="1180" y2="1180" stroke="#8a8a8a" stroke-width="2.5" />
          <polyline class="thin" stroke="#d8d800" :points="yellow3" />
          <polyline class="thin" stroke="#f00000" :points="red3" />
          <rect x="1711" y="1259" width="49" height="23" fill="none" stroke="#a00000" stroke-width="1.5" />
          <text class="axis-small" x="1735" y="1271">X100</text>
        </svg>

        <svg class="time-axis" viewBox="0 1282 1788 24" width="1788" height="24">
          <line class="frame" x1="1710.5" x2="1710.5" y1="1282" y2="1306" />
          <line v-for="x in timeMinor" :key="x" class="frame" :x1="x" :x2="x" y1="1283" y2="1286" />
          <text class="time-text" x="7" y="1295">2021年</text>
          <g v-for="m in timeMarks" :key="m.t">
            <line class="frame" :x1="m.x" :x2="m.x" y1="1283" y2="1306" />
            <text class="time-text" :x="m.x + 2" y="1295">{{ m.t }}</text>
          </g>
          <rect x="610" y="1283" width="116" height="23" fill="#00008c" />
          <text class="time-date" x="668" y="1295">2021/11/24/三</text>
          <text class="time-period" x="1748" y="1295">日线</text>
        </svg>

        <div class="tabs">
          <span v-for="t in tabsA" :key="t.t" class="tab" :class="t.c" :style="{ width: t.w + 'px' }">{{ t.t }}</span>
        </div>
        <div class="tabs second">
          <span v-for="t in tabsB" :key="t.t" class="tab" :class="t.c" :style="{ width: t.w + 'px' }">{{ t.t }}</span>
        </div>
      </main>

      <aside class="quote">
        <div class="q-name">
          <span class="q-title">凯撒文化</span>
          <span class="q-code">002425</span>
          <span class="q-flag">R</span>
        </div>
        <div class="q-price">
          <span>7.34</span>
          <span class="q-change">▲0.28</span>
          <span>3.97%</span>
        </div>

        <div class="book">
          <div v-for="(r, i) in sell" :key="r[0]" class="book-row">
            <span class="q-label">{{ r[0] }}<span v-if="i === 0" class="yen"> ￥</span></span>
            <span class="q-val q-red">{{ r[1] }}</span>
            <span class="q-val q-olive">{{ r[2] }}<span class="unit">万</span></span>
          </div>
        </div>
        <div class="book-split"></div>
        <div class="book">
          <div v-for="r in buy" :key="r[0]" class="book-row">
            <span class="q-label">{{ r[0] }}</span>
            <span class="q-val q-red">{{ r[1] }}</span>
            <span class="q-val q-olive">{{ r[2] }}<span class="unit">万</span></span>
          </div>
        </div>

        <div class="stat-block">
          <div v-for="s in stats" :key="s.a" class="stat-row">
            <span class="q-label">{{ s.a }}</span>
            <span class="q-val" :class="s.bc">{{ s.b }}</span>
            <span class="q-label">{{ s.c }}</span>
            <span class="q-val" :class="s.dc">{{ s.d }}<span v-if="s.du" class="unit">{{ s.du }}</span></span>
          </div>
        </div>
        <div class="stat-block second">
          <div v-for="s in stats2" :key="s.a" class="stat-row">
            <span class="q-label">{{ s.a }}</span>
            <span class="q-val" :class="s.bc">{{ s.b }}</span>
            <span class="q-label">{{ s.c }}</span>
            <span class="q-val" :class="s.dc">{{ s.d }}<span v-if="s.du" class="unit">{{ s.du }}</span></span>
          </div>
        </div>
        <div class="flow-block">
          <div v-for="f in flows" :key="f.a" class="flow-row">
            <span class="q-label">{{ f.a }}</span>
            <span class="flow-cell"><span class="flow-bar" :style="{ width: f.w + 'px' }"></span></span>
            <span class="q-val q-red">{{ f.v }}<span class="unit">万</span></span>
            <span class="q-val q-red">{{ f.p }}</span>
          </div>
        </div>
        <div class="tick-list">
          <div v-for="(t, i) in ticks" :key="i" class="tick-row">
            <span class="t-time">{{ t[0] }}</span>
            <span class="t-num t-red">{{ t[1] }}</span>
            <span class="t-num" :class="t[5] ? 't-magenta' : 't-yellow'">{{ t[2] }}<span class="unit">万</span></span>
            <span class="t-side" :class="t[3] === 'S' ? 't-green' : 't-red'">{{ t[3] }}</span>
            <span class="t-num t-gray">{{ t[4] }}</span>
          </div>
        </div>
      </aside>

      <aside class="sidebar">
        <div class="side-item">
          <svg viewBox="0 0 28 20" width="28" height="20"><path d="M2 10 L12 2 V6 H26 V14 H12 V18 Z" fill="#fff" stroke="#4a86e8" stroke-width="1.6" /></svg>
        </div>
        <div class="side-item">
          <svg viewBox="0 0 24 26" width="24" height="26"><path d="M12 2 L22 12 H17 V24 H7 V12 H2 Z" fill="#fff" stroke="#4a86e8" stroke-width="1.6" /></svg>
        </div>
        <div class="side-item">
          <svg viewBox="0 0 24 26" width="24" height="26"><path d="M12 24 L22 14 H17 V2 H7 V14 H2 Z" fill="#fff" stroke="#4a86e8" stroke-width="1.6" /></svg>
        </div>
        <div class="side-item">
          <span class="side-box"><svg viewBox="0 0 24 14" width="24" height="14"><path d="M1 2 H9 M1 6 H9 M1 10 H9" stroke="#1a9a3a" stroke-width="2" /><path d="M12 2 H23" stroke="#e02020" stroke-width="2" /><path d="M12 6 H23" stroke="#2040d0" stroke-width="2" /><circle cx="17" cy="10" r="4" fill="none" stroke="#777" stroke-width="1.5" /></svg></span>
        </div>
        <div class="side-item">
          <span class="side-box"><svg viewBox="0 0 24 14" width="24" height="14"><path d="M3 2 V12" stroke="#e02020" stroke-width="4" stroke-dasharray="2 1" /><path d="M9 2 V12" stroke="#2040d0" stroke-width="4" stroke-dasharray="2 1" /><path d="M15 2 V12" stroke="#e02020" stroke-width="4" stroke-dasharray="2 1" /><path d="M21 2 V12" stroke="#2040d0" stroke-width="4" stroke-dasharray="2 1" /></svg></span>
        </div>
        <div class="side-item">
          <span class="side-box"><svg viewBox="0 0 24 14" width="24" height="14"><path d="M1 11 L7 7 L11 9 L17 5 L23 3" fill="none" stroke="#e02020" stroke-width="1.4" /></svg></span>
        </div>
        <div class="side-item">
          <span class="side-box"><svg viewBox="0 0 24 14" width="24" height="14"><path d="M4 1 V13 M12 1 V13 M20 1 V13" stroke="#333" stroke-width="1" /><rect x="2" y="5" width="4" height="5" fill="#e02020" /><rect x="10" y="4" width="4" height="7" fill="#109030" /><rect x="18" y="2" width="4" height="7" fill="#e02020" /></svg></span>
        </div>
        <div class="side-item">
          <svg viewBox="0 0 28 22" width="28" height="22"><rect x="6" y="1" width="21" height="15" fill="#fff" stroke="#4a86e8" stroke-width="1.4" /><rect x="1" y="5" width="21" height="15" fill="#fff" stroke="#4a86e8" stroke-width="1.4" /><path d="M4 10 H19 M4 13 H19 M4 16 H19" stroke="#888" stroke-width="1.4" /></svg>
        </div>
        <div class="side-item"><span class="side-box side-text">F10</span></div>
        <div class="side-item">
          <span class="side-box"><svg viewBox="0 0 24 14" width="24" height="14"><path d="M3 1 V12 H12 M3 6 H12" fill="none" stroke="#888" stroke-width="1" /><rect x="1" y="1" width="8" height="3" fill="#f0a020" /><rect x="11" y="4" width="11" height="3" fill="#f0a020" /><rect x="11" y="9" width="11" height="3" fill="#f0a020" /></svg></span>
        </div>
        <div class="side-item"><span class="side-box side-orange">自</span></div>
        <div class="side-item"><span class="side-box side-text">F12</span></div>
        <div class="side-item"><span class="side-box side-round">f(x)</span></div>
        <div class="side-item">
          <span class="side-box"><svg viewBox="0 0 24 14" width="24" height="14"><ellipse cx="12" cy="7" rx="7" ry="5" fill="none" stroke="#4a86e8" stroke-width="2" /></svg></span>
        </div>
        <div class="side-sep"></div>
        <div class="side-item">
          <span class="side-box"><svg viewBox="0 0 24 14" width="24" height="14"><path d="M1 5 L5 2 L9 5 L13 2 L17 5 L23 2" fill="none" stroke="#e02020" stroke-width="1.4" /><path d="M1 11 L5 8 L9 11 L13 8 L17 11 L23 8" fill="none" stroke="#2040d0" stroke-width="1.4" /></svg></span>
        </div>
        <div class="side-item"><span class="side-rsi">RSI</span></div>
        <div class="side-item"><span class="side-s">S</span></div>
        <div class="side-item">
          <svg viewBox="0 0 26 22" width="26" height="22"><path d="M13 0 L17 5 H9 Z M13 22 L9 17 H17 Z M0 11 L5 7 V15 Z M26 11 L21 7 V15 Z" fill="#1040c0" /><rect x="7" y="6" width="12" height="10" fill="#1040c0" /><path d="M7 11 H19 M13 6 V16" stroke="#fff" stroke-width="1" /></svg>
        </div>
        <div class="side-item">
          <svg viewBox="0 0 28 24" width="28" height="24"><path d="M2 23 L4 16 L20 3 C22 1 25 2 26 4 C27 6 26 8 24 9 L8 21 Z" fill="#f0c040" stroke="#a07030" stroke-width="1" /><path d="M20 3 C22 1 25 2 26 4 C27 6 26 8 24 9 Z" fill="#f08080" /></svg>
        </div>
        <div class="side-sep"></div>
        <div class="side-item"><span class="side-box side-text">FS</span></div>
        <div class="side-item">
          <span class="side-box"><svg viewBox="0 0 24 14" width="24" height="14"><path d="M5 7 C5 3 9 2 12 2 C15 2 17 3 18 5 L21 3 V9 H15 L17 7 C16 5 14 5 12 5 C10 5 8 6 8 8 Z" fill="#30a840" /><path d="M19 8 C19 11 15 12 12 12 C9 12 7 11 6 9 L3 11 V6 H9 L7 8 C8 9 10 10 12 10 Z" fill="#70c050" /></svg></span>
        </div>
        <div v-for="n in sideNums" :key="n" class="side-item side-num">{{ n }}</div>
        <div class="side-item side-num side-active">日</div>
        <div v-for="c in sideChars" :key="c" class="side-item side-num">{{ c }}</div>
      </aside>
    </div>

    <footer class="statusbar">
      <span class="st-icon"></span>
      <span v-for="(s, i) in statusItems" :key="i" class="st-item" :class="s.c" :style="{ width: s.w + 'px' }">{{ s.t }}</span>
    </footer>

    <!-- screen capture has this area wiped to black in the original -->
    <div class="wiped"></div>

    <div class="ime-bar">
      <span class="ime-a">A</span>
      <span class="ime-name">极品五笔</span>
      <span class="ime-btn">
        <svg viewBox="0 0 14 16" width="14" height="16"><path d="M9 1 C4 2 2 6 3 10 C4 14 9 15 13 13 C8 13 6 8 9 1 Z" fill="#000" /></svg>
      </span>
      <span class="ime-btn">·,</span>
      <span class="ime-btn ime-keys"></span>
    </div>

    <div class="watermark">
      <span class="wm-cn">公式指标网</span>
      <svg class="wm-logo" viewBox="0 0 78 78" width="78" height="78">
        <path d="M5 36 A34 34 0 0 1 73 36" fill="none" stroke="#d8614e" stroke-width="9" />
        <path d="M5 42 A34 34 0 0 0 73 42" fill="none" stroke="#ecc945" stroke-width="9" />
        <path d="M33 0 H45 V14 L52 22 V40 L46 46 L52 56 L46 70 L40 78 H32 V56 L26 46 V22 L33 14 Z" fill="#ecc945" />
        <path d="M32 28 H47 M32 36 H47 M40 22 V46 M30 52 H48" stroke="#d8614e" stroke-width="3" />
      </svg>
      <span class="wm-url">www.9m8.cn</span>
    </div>
  </div>
</template>

<style scoped>
.screen {
  position: relative;
  width: 2160px;
  height: 1395px;
  overflow: hidden;
  background: #000;
  font-family: "Liberation Sans", "Noto Sans CJK SC", sans-serif;
  color: #c0c0c0;
  filter: blur(0.35px);
}

.titlebar {
  height: 34px;
  border-bottom: 2px solid #a8a8a8;
  background: #f6f6f6;
  display: flex;
  align-items: center;
  color: #333;
  font-size: 17px;
  white-space: nowrap;
}
.logo { margin-left: 5px; flex: none; }
.app-name { width: 173px; margin-left: 5px; font-size: 18px; color: #333; }
.menu { display: flex; width: 955px; }
.menu-item { width: 72px; }
.login { color: #f02020; font-size: 19px; width: 118px; }
.login-name { width: 315px; }
.menu-right { width: 283px; }
.menu-item-right { width: 57px; }
.clock { width: 124px; height: 34px; line-height: 32px; border-left: 1px solid #c8c8c8; border-right: 1px solid #c8c8c8; padding-left: 3px; box-sizing: border-box; font-size: 17px; }
.win-buttons { display: flex; align-items: center; gap: 21px; margin-left: 20px; }

.body { display: flex; height: 1322px; }
.chart-col { width: 1788px; flex: none; }

.toolbar {
  height: 28px;
  border-bottom: 2px solid #a00000;
  display: flex;
  align-items: center;
  font-size: 17px;
  white-space: nowrap;
}
.layout-btn {
  width: 34px;
  height: 28px;
  margin-right: 9px;
  border-right: 1px solid #900000;
  box-sizing: border-box;
  display: flex;
  align-items: center;
  justify-content: center;
}
.mini-box {
  width: 16px;
  height: 16px;
  flex: none;
  border: 2px solid #808080;
  border-radius: 2px;
  box-sizing: border-box;
  background: linear-gradient(90deg, transparent 55%, #909090 55%);
}
.period { display: block; }
.tools { margin-left: auto; display: flex; height: 28px; width: 421px; }
.tool { border-left: 1px solid #a00000; box-sizing: border-box; text-align: center; line-height: 28px; }

.info-row, .pane-title { display: flex; white-space: nowrap; }
.info-row { height: 26px; }
.info-left, .title-left { width: 1710px; display: flex; align-items: center; padding-left: 3px; box-sizing: border-box; overflow: hidden; }
.title-left.lifted { padding-bottom: 7px; }
.title-left.lifted-less { padding-bottom: 3px; }
.axis-cell { width: 78px; border-left: 1px solid #a00000; box-sizing: border-box; }
.info-name { width: 128px; font-size: 18px; }
.chevron {
  width: 16px;
  height: 16px;
  border-radius: 50%;
  background: #808080;
  flex: none;
  margin-right: 6px;
  position: relative;
}
.chevron::after {
  content: "";
  position: absolute;
  left: 4px;
  top: 3px;
  width: 5px;
  height: 5px;
  border-right: 2px solid #222;
  border-bottom: 2px solid #222;
  transform: rotate(45deg);
}
.chevron.first { margin-left: 0; margin-right: 7px; }
.info-main { width: 85px; font-size: 18px; }
.info-item { display: block; font-size: 18px; overflow: visible; }
.info-item.tall { font-size: 18px; }
.diamond-glyph { width: 29px; margin-left: auto; color: #808080; font-size: 17px; }

.pane-title { height: 29px; border-top: 2px solid #a00000; }
.pane-title.short { height: 25px; }
.pane-name { width: 88px; font-size: 18px; }
.pane-name.narrow { width: 80px; }

.chart { display: block; overflow: visible; }
.chart text, .time-axis text {
  font-family: "Liberation Sans", "Noto Sans CJK SC", sans-serif;
  dominant-baseline: central;
}
.time-axis { display: block; }
.dots { stroke: #c00000; stroke-width: 1.6; stroke-dasharray: 2 5; }
.frame { stroke: #a00000; stroke-width: 1.5; }
.band { fill: #808080; }
.thin { fill: none; stroke-width: 1.4; stroke-linejoin: round; }
.thick { fill: none; stroke-width: 5; stroke-linejoin: round; stroke-linecap: round; }
.wick-c { stroke: #54ffff; stroke-width: 1.5; }
.wick-r { stroke: #ff3232; stroke-width: 1.5; }
.wick-w { stroke: #f0f0f0; stroke-width: 1.5; }
.body-c { fill: #54ffff; }
.body-r { fill: #000; stroke: #ff3232; stroke-width: 1.5; }
.body-m { fill: #ff00ff; }
.hollow-red { fill: none; stroke: #ff0000; stroke-width: 1.6; }
.axis-text { fill: #d82020; font-size: 18px; text-anchor: end; }
.axis-small { fill: #d82020; font-size: 16px; text-anchor: middle; }
.axis-now { fill: #d0d0e8; font-size: 18px; }
.gray-text { fill: #b0b0b0; font-size: 17px; }
.mark { font-size: 18px; text-anchor: middle; }
.f-yellow { fill: #e8d800; }
.f-cyan { fill: #18e0e0; }
.f-sky { fill: #6c9cff; }
.f-red { fill: #ff2020; }
.f-pink { fill: #ff70c8; }
.f-green { fill: #00ee00; }
.f-white { fill: #e8e8e8; }
.f-magenta { fill: #ff00ff; }
.tag { fill: #fff; font-size: 16px; text-anchor: middle; }
.bag-text { fill: #a06820; font-size: 15px; font-weight: 700; text-anchor: middle; }
.time-text { fill: #d82020; font-size: 17px; }
.time-date { fill: #d8d8f0; font-size: 16.5px; text-anchor: middle; }
.time-period { fill: #c0c0c0; font-size: 17px; text-anchor: middle; }

.c-red { color: #ff1010; }
.c-blue { color: #0a78ff; }
.c-white { color: #e8e8e8; }
.c-yellow { color: #f0f000; }
.c-lime { color: #50e000; }
.c-purple { color: #a878f0; }
.c-cyan { color: #18e8e8; }
.c-green { color: #00e000; }
.c-magenta { color: #ff00ff; }
.c-gray { color: #909090; }
.c-olive { color: #c8c800; }

.tabs {
  height: 24px;
  padding-left: 3px;
  border-top: 2px solid #a00000;
  display: flex;
  font-size: 17px;
  white-space: nowrap;
}
.tab { box-sizing: border-box; border-right: 1.5px solid #a00000; text-align: center; line-height: 26px; }
.tabs.second .tab { line-height: 28px; }

.quote {
  width: 335px;
  flex: none;
  box-sizing: border-box;
  border-left: 2px solid #a00000;
  overflow: hidden;
  padding-left: 1px;
}
.q-name { height: 45px; display: flex; align-items: center; position: relative; padding-left: 51px; }
.q-title { color: #10d8e0; font-size: 28px; font-weight: 700; width: 120px; line-height: 36px; }
.q-code { font-size: 21px; color: #b8b8b8; width: 79px; }
.q-flag { color: #f02020; font-size: 15px; margin-top: -14px; }
.q-price {
  height: 39px;
  box-sizing: border-box;
  padding-bottom: 3px;
  border-bottom: 2px solid #a00000;
  display: grid;
  grid-template-columns: 121px 122px 82px;
  align-items: center;
  padding-left: 3px;
  color: #ff2a2a;
  font-size: 28px;
  font-weight: 700;
  letter-spacing: 0.5px;
}
.book-row { height: 27px; display: grid; grid-template-columns: 70px 90px 167px; align-items: center; }
.q-label { font-size: 23px; color: #b4b4b4; white-space: nowrap; line-height: 27px; }
.yen { font-size: 20px; }
.q-val { text-align: right; font-size: 20px; font-weight: 700; letter-spacing: 0.5px; white-space: nowrap; }
.unit { font-weight: 400; font-size: 21px; letter-spacing: 0; }
.q-red { color: #ff3030; }
.q-green { color: #00f000; }
.q-magenta { color: #c000c8; }
.q-gray { color: #b8b8b8; }
.q-olive { color: #b8b800; }
.book-split { height: 2px; background: linear-gradient(90deg, #c08020 25%, #2f78b8 25%); }
.book { padding-top: 0; }
.book-split + .book { padding-top: 1px; }
.stat-block { margin-top: 2px; border-top: 2px solid #a00000; padding-top: 1px; }
.stat-block.second { margin-top: 0; padding-bottom: 5px; }
.stat-row { height: 28.5px; display: grid; grid-template-columns: 64px 96px 8px 64px 95px; align-items: center; }
.stat-row .q-label:nth-child(3) { grid-column: 4; }
.stat-row .q-val:nth-child(4) { grid-column: 5; }
.flow-block { border-top: 2px solid #a00000; padding-top: 1px; }
.flow-row { height: 28.5px; display: grid; grid-template-columns: 138px 60px 68px 62px; align-items: center; }
.flow-cell { display: flex; align-items: center; }
.flow-bar { height: 10px; background: #ff2a2a; }
.tick-list { border-top: 2px solid #a00000; padding-top: 1px; }
.tick-row { height: 26.9px; display: grid; grid-template-columns: 53px 103px 93px 38px 40px; align-items: center; font-size: 21px; white-space: nowrap; }
.t-time { color: #c0c0c0; }
.t-num { text-align: right; }
.t-side { text-align: center; padding-left: 10px; box-sizing: border-box; }
.t-num .unit { font-size: 20px; }
.t-red { color: #ff2a2a; }
.t-yellow { color: #c8c800; }
.t-magenta { color: #d000d8; }
.t-green { color: #00e000; }
.t-gray { color: #909090; }

.sidebar {
  width: 37px;
  flex: none;
  box-sizing: border-box;
  margin-top: -2px;
  background: #f0f0f0;
  border-left: 2px solid #404040;
}
.side-item { height: 34.4px; display: flex; align-items: center; justify-content: center; }
.side-sep { height: 13px; position: relative; }
.side-sep::after { content: ""; position: absolute; left: 2px; right: 2px; top: 6px; height: 1px; background: #a0a0a0; }
.side-box {
  width: 28px;
  height: 20px;
  box-sizing: border-box;
  border: 2px solid #5a8ee8;
  background: #fff;
  display: flex;
  align-items: center;
  justify-content: center;
  overflow: hidden;
}
.side-text { color: #1a50b0; font-size: 13px; font-weight: 700; }
.side-orange { color: #f07020; font-size: 15px; font-weight: 700; }
.side-round { color: #103080; font-size: 12px; font-weight: 700; border-radius: 6px; border-color: #208080; }
.side-rsi { color: #2840b8; font-size: 14px; font-weight: 700; }
.side-s { color: #c02828; font-size: 22px; font-weight: 700; }
.side-num { color: #1c4ca0; font-size: 16px; }
.side-active { background: #fafafa; border: 1px solid #b8b8b8; box-sizing: border-box; }

.statusbar {
  height: 37px;
  box-sizing: border-box;
  background: #f2f2f2;
  border-top: 2px solid #dcdcdc;
  display: flex;
  align-items: center;
  white-space: nowrap;
  font-size: 21px;
}
.st-icon {
  width: 18px;
  height: 24px;
  margin: 0 4px 0 2px;
  flex: none;
  border: 2px solid #d89020;
  box-sizing: border-box;
  background: #f8d860;
}
.st-item { display: block; flex: none; }
.st-name { color: #333; font-size: 23px; }
.st-first { border-left: 1px solid #b0b0b0; padding-left: 3px; box-sizing: border-box; }
.st-red { color: #ff1010; }
.st-green { color: #108018; }
.st-dark { color: #181818; font-weight: 700; }

.wiped { position: absolute; left: 540px; top: 643px; width: 1080px; height: 106px; background: #000; }

.ime-bar {
  position: absolute;
  left: 1886px;
  top: 1206px;
  width: 157px;
  height: 26px;
  box-sizing: border-box;
  background: #d4d0c8;
  border: 2px solid #f4f4f4;
  display: flex;
  align-items: center;
  color: #000;
  font-size: 17px;
  white-space: nowrap;
}
.ime-a { width: 22px; color: #a00000; text-align: center; border-right: 1px solid #808080; }
.ime-name { width: 72px; text-align: center; border-right: 1px solid #808080; }
.ime-btn { width: 20px; height: 18px; display: flex; align-items: center; justify-content: center; font-size: 14px; border-right: 1px solid #808080; }
.ime-keys { background: repeating-linear-gradient(0deg, #909090 0 2px, #d4d0c8 2px 4px); height: 18px; }

.watermark {
  position: absolute;
  left: 1360px;
  top: 1314px;
  width: 800px;
  height: 81px;
  background: #7fa8d8;
  display: flex;
  align-items: center;
  white-space: nowrap;
}
.wm-cn {
  margin-left: 15px;
  width: 308px;
  color: #14108c;
  font-family: "Noto Sans CJK SC", sans-serif;
  font-weight: 700;
  font-size: 55px;
  line-height: 70px;
}
.wm-logo { flex: none; }
.wm-url {
  margin-left: 29px;
  color: #fff;
  font-family: "Liberation Serif", serif;
  font-weight: 700;
  font-size: 65px;
  line-height: 70px;
}
</style>

<style>
body {
  margin: 0;
  background: #000;
}
</style>
